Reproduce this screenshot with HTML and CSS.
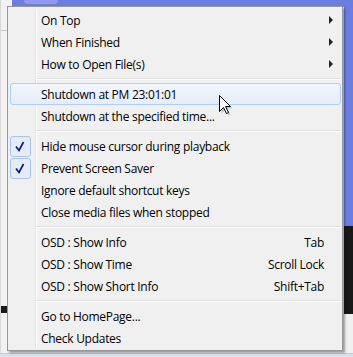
FILE: index.html
```html
<!DOCTYPE html>
<html>
<head>
<meta charset="utf-8">
<link rel="stylesheet" href="styles.css">
</head>
<body>
<div class="desk">
  <div class="bg-left"><div class="bg-left-line"></div><div class="bg-left-dark"></div></div>
  <div class="bg-mid"><div class="bg-top"><span class="blob"></span></div></div>
  <div class="bg-right"><div class="bg-right-blue"></div><div class="bg-right-dark"></div></div>
  <div class="bg-bottom"></div>
</div>
<div class="menu">
  <div class="item"><span class="chk"></span><span class="label">On Top</span><span class="arrow"></span></div>
  <div class="item"><span class="chk"></span><span class="label">When Finished</span><span class="arrow"></span></div>
  <div class="item"><span class="chk"></span><span class="label">How to Open File(s)</span><span class="arrow"></span></div>
  <div class="sep"></div>
  <div class="item hot"><span class="chk"></span><span class="label">Shutdown at PM 23:01:01</span></div>
  <div class="item"><span class="chk"></span><span class="label">Shutdown at the specified time...</span></div>
  <div class="sep"></div>
  <div class="item"><span class="chk on"><svg width="19" height="19" viewBox="0 0 19 19"><path d="M5 9.5 L8 13.5 L12.5 5" fill="none" stroke="#0c1a80" stroke-width="1.7"/></svg></span><span class="label">Hide mouse cursor during playback</span></div>
  <div class="item"><span class="chk on"><svg width="19" height="19" viewBox="0 0 19 19"><path d="M5 9.5 L8 13.5 L12.5 5" fill="none" stroke="#0c1a80" stroke-width="1.7"/></svg></span><span class="label">Prevent Screen Saver</span></div>
  <div class="item"><span class="chk"></span><span class="label">Ignore default shortcut keys</span></div>
  <div class="item"><span class="chk"></span><span class="label">Close media files when stopped</span></div>
  <div class="sep"></div>
  <div class="item"><span class="chk"></span><span class="label">OSD : Show Info</span><span class="key">Tab</span></div>
  <div class="item"><span class="chk"></span><span class="label">OSD : Show Time</span><span class="key">Scroll Lock</span></div>
  <div class="item"><span class="chk"></span><span class="label">OSD : Show Short Info</span><span class="key">Shift+Tab</span></div>
  <div class="sep"></div>
  <div class="item"><span class="chk"></span><span class="label">Go to HomePage...</span></div>
  <div class="item"><span class="chk"></span><span class="label">Check Updates</span></div>
</div>
<svg class="cursor" width="15" height="22" viewBox="0 0 15 22"><polygon points="1.5,1.5 1.5,17.5 5.5,13.5 8.5,19.5 10.5,18.5 7.5,12.5 12.5,12.5" fill="rgba(0,0,0,0.18)" transform="translate(1,1)"/><polygon points="0.5,0.5 0.5,16.5 4.5,12.5 7.5,18.5 9.5,17.5 6.5,11.5 11.5,11.5" fill="#fff" stroke="#000" stroke-width="1"/></svg>
</body>
</html>
```

FILE: styles.css
```css
html, body {
  margin: 0;
  padding: 0;
}
body {
  width: 353px;
  height: 357px;
  overflow: hidden;
  position: relative;
  background: #f0f0f0;
  font-family: "Open Sans", "Noto Sans", sans-serif;
}
.desk {
  display: grid;
  grid-template-columns: 12px 1fr 9px;
  grid-template-rows: 1fr 4px;
  height: 357px;
}
.bg-left {
  background: #f2f2f2;
  border-left: 1px solid #d8d8d8;
  display: flex;
  flex-direction: column;
}
.bg-left-line {
  margin-top: 30px;
  height: 1px;
  background: #c8c8c8;
}
.bg-left-dark {
  margin-top: 275px;
  height: 7px;
  background: #1a1a1a;
}
.bg-mid {
  display: flex;
  flex-direction: column;
}
.bg-top {
  height: 7px;
  background: #6b7ee0;
}
.blob {
  display: block;
  margin-left: 12px;
  width: 34px;
  height: 4px;
  border-radius: 0 0 12px 12px;
  background: #8f9bea;
}
.bg-right {
  display: flex;
  flex-direction: column;
}
.bg-right-blue {
  height: 226px;
  background: #6b7ee0;
}
.bg-right-dark {
  height: 88px;
  background: #181818;
}
.bg-bottom {
  grid-column: 1 / -1;
  background: #d3e3f5;
  border-top: 1px solid #b9cde6;
}

.menu {
  position: absolute;
  left: 7px;
  top: 6px;
  width: 331px;
  padding: 2px 1px 1px 2px;
  background: #f0f0f0;
  border: 1px solid #979797;
  box-shadow: 2px 2px 2px rgba(0,0,0,0.35);
  color: #000;
  font-size: 12px;
  letter-spacing: -0.28px;
}
.menu::before {
  content: "";
  position: absolute;
  left: 27px;
  top: 2px;
  bottom: 2px;
  width: 1px;
  background: #e2e3e3;
  border-right: 1px solid #ffffff;
}
.item {
  height: 22px;
  display: flex;
  align-items: center;
  position: relative;
  box-sizing: border-box;
  border: 1px solid transparent;
  border-radius: 3px;
}
.item.hot {
  border-color: #aecff7;
  background: linear-gradient(#f2f6fc, #e5edf9);
}
.chk {
  width: 21px;
  height: 21px;
  flex: none;
  margin-left: -1px;
  box-sizing: border-box;
  display: flex;
  align-items: center;
  justify-content: center;
}
.chk.on {
  border: 1px solid #a9c4ec;
  border-radius: 3px;
  background: #e4ecf8;
}
.label {
  margin-left: 10px;
  white-space: nowrap;
  position: relative;
  z-index: 1;
}
.arrow {
  margin-left: auto;
  margin-right: 7px;
  width: 0;
  height: 0;
  border-left: 4px solid #222;
  border-top: 4px solid transparent;
  border-bottom: 4px solid transparent;
}
.key {
  margin-left: auto;
  margin-right: 16px;
  white-space: nowrap;
}
.sep {
  height: 8px;
  margin-left: 25px;
  box-sizing: border-box;
  padding-top: 3px;
}
.sep::after {
  content: "";
  display: block;
  height: 1px;
  background: #e0e0e0;
  border-bottom: 1px solid #ffffff;
}
.cursor {
  position: absolute;
  left: 219px;
  top: 95px;
}
```
